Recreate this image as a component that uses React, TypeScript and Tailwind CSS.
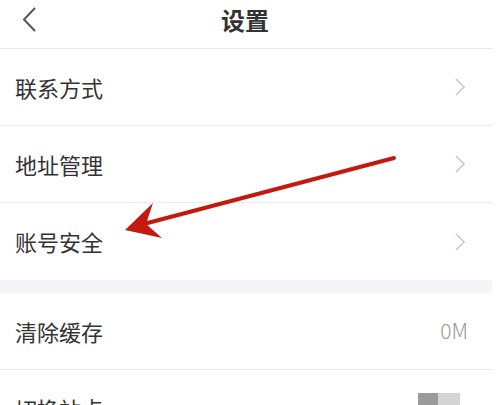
const ChevronRight = () => (
  <svg width="12" height="20" viewBox="0 0 12 20" fill="none">
    <path d="M2 2l8 8-8 8" stroke="#c9c9c9" strokeWidth="1.6" />
  </svg>
);

const Row = ({ label, right, border = true }: { label: string; right?: React.ReactNode; border?: boolean }) => (
  <div className={`h-[77px] flex items-center justify-between pl-[15px] pr-[26px] ${border ? 'border-b border-[#ececec]' : ''}`}>
    <span className="text-[22px] text-[#333]">{label}</span>
    {right}
  </div>
);

export default function App() {
  return (
    <div
      className="w-[496px] h-[405px] overflow-hidden bg-white relative"
      style={{ fontFamily: '"Noto Sans CJK SC", "Noto Sans", sans-serif' }}
    >
      <div className="w-[492px]">
        <div className="h-[49px] flex items-center justify-center relative border-b border-[#e6e6e6]">
          <svg className="absolute left-[20px] top-[6px]" width="18" height="27" viewBox="0 0 18 27" fill="none">
            <path d="M15 2L4 13.5 15 25" stroke="#555" strokeWidth="2" />
          </svg>
          <span className="text-[24px] font-bold text-[#333] -mt-[9px] -ml-[2px]">设置</span>
        </div>
        <Row label="联系方式" right={<ChevronRight />} />
        <Row label="地址管理" right={<ChevronRight />} />
        <Row label="账号安全" right={<ChevronRight />} border={false} />
        <div className="h-[13px] bg-[#f4f5f7]" />
        <Row label="清除缓存" right={<span className="text-[21px] font-light text-[#999] -mr-[2px]">0M</span>} />
        <div className="h-[77px] flex items-start justify-between pl-[15px] pr-[32px] pt-[22px]">
          <span className="text-[22px] text-[#333]">切换站点</span>
          <div className="flex mt-[1px]">
            <div className="w-[20px] h-[24px] bg-[#9a9a9a]" />
            <div className="w-[22px] h-[24px] bg-[#d4d4d4]" />
          </div>
        </div>
      </div>
      <svg className="absolute left-0 top-0 pointer-events-none" width="496" height="405" viewBox="0 0 496 405">
        <line x1="394" y1="158" x2="140" y2="225" stroke="#c4190f" strokeWidth="4" strokeLinecap="round" />
        <path d="M125 230L153 203L146 224L162 238Z" fill="#c4190f" />
      </svg>
    </div>
  );
}
